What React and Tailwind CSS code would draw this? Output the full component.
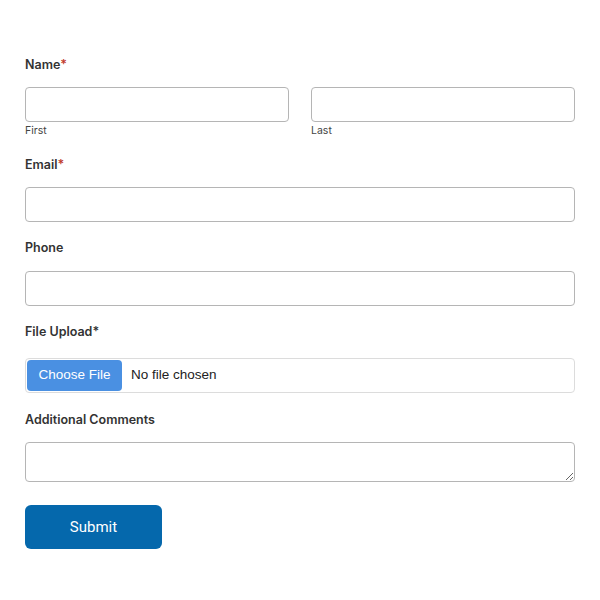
export default function App() {
  const label = 'block h-5 text-[12.5px] leading-5 font-semibold text-[#333]'
  const input = 'block w-full h-[35px] rounded-[4px] border border-[#b5b5b5] bg-white px-2 text-[14px] outline-none'

  return (
    <div className="w-[600px] h-[600px] bg-white px-[25px] pt-[55px]" style={{ fontFamily: 'Inter, "Liberation Sans", sans-serif' }}>
      <form className="flex flex-col" onSubmit={(e) => e.preventDefault()}>
        <label className={label}>
          Name<span className="text-[#c0392b]">*</span>
        </label>
        <div className="mt-3 flex gap-[22px]">
          <div className="flex-1">
            <input type="text" className={input} />
            <span className="mt-[2px] block h-[14px] text-[10.5px] leading-[14px] text-[#444]">First</span>
          </div>
          <div className="flex-1">
            <input type="text" className={input} />
            <span className="mt-[2px] block h-[14px] text-[10.5px] leading-[14px] text-[#444]">Last</span>
          </div>
        </div>

        <label className={`${label} mt-[17px]`}>
          Email<span className="text-[#c0392b]">*</span>
        </label>
        <input type="email" className={`${input} mt-3`} />

        <label className={`${label} mt-4`}>Phone</label>
        <input type="tel" className={`${input} mt-[13px]`} />

        <label className={`${label} mt-4`}>File Upload*</label>
        <div className="mt-4 flex h-[35px] items-center rounded-[4px] border border-[#dcdcdc] bg-white pl-px">
          <span className="flex h-[31px] w-[95px] items-center justify-center rounded-[4px] bg-[#4a90e2] text-[13.5px] text-white" style={{ fontFamily: '"Liberation Sans", Arial, sans-serif' }}>
            Choose File
          </span>
          <span className="ml-[9px] text-[13.5px] text-[#222]" style={{ fontFamily: '"Liberation Sans", Arial, sans-serif' }}>
            No file chosen
          </span>
        </div>

        <label className={`${label} mt-[17px]`}>Additional Comments</label>
        <textarea className="mt-3 block h-[40px] w-full rounded-[4px] border border-[#b5b5b5] bg-white px-2 text-[14px] outline-none" />

        <button type="submit" className="mt-[23px] h-[44px] w-[137px] rounded-[6px] bg-[#0568ac] text-[15px] text-white" style={{ fontFamily: 'Roboto, "Liberation Sans", sans-serif' }}>
          Submit
        </button>
      </form>
    </div>
  )
}
